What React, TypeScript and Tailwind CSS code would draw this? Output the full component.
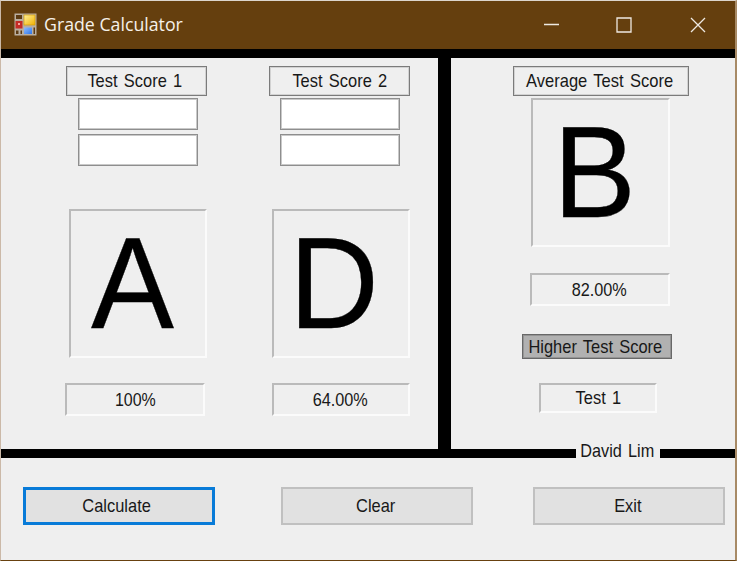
import type { ReactNode } from "react";

function Caption({ children, className = "scale-x-[0.865]" }: { children: ReactNode; className?: string }) {
  return (
    <span className={`inline-block whitespace-pre text-[19px] leading-[22px] text-[#181818] [word-spacing:2px] ${className}`}>
      {children}
    </span>
  );
}

function Heading({ children, className }: { children: ReactNode; className: string }) {
  return (
    <div className={`flex h-[30px] shrink-0 justify-center border border-[#7b7b7b] pt-[3px] shadow-[inset_0_0_0_1px_#d2d2d2] ${className}`}>
      {children}
    </div>
  );
}

function Sunken({ children, className }: { children: ReactNode; className: string }) {
  return (
    <div className={`flex shrink-0 border-2 border-t-[#bababa] border-r-[#fbfbfb] border-b-[#fbfbfb] border-l-[#bababa] ${className}`}>
      {children}
    </div>
  );
}

function Grade({ letter, className }: { letter: string; className: string }) {
  return (
    <Sunken className={`h-[149px] ${className}`}>
      <span className="inline-block origin-left scale-x-[0.965] text-[129px] leading-[145px] text-black [-webkit-text-stroke:0.3px_black]">
        {letter}
      </span>
    </Sunken>
  );
}

function ScoreInput({ className }: { className: string }) {
  return (
    <input
      aria-label="Score"
      className={`block h-8 w-[120px] shrink-0 border border-[#8e8e8e] bg-white shadow-[inset_0_0_0_1px_#c9c9c9] outline-none ${className}`}
    />
  );
}

function Button({ label, className }: { label: string; className: string }) {
  return (
    <button className={`flex h-[38px] w-[192px] shrink-0 items-center justify-center bg-[#e1e1e1] ${className}`}>
      <Caption>{label}</Caption>
    </button>
  );
}

function FormIcon() {
  return (
    <svg width="23" height="23" viewBox="0 0 23 23" className="relative -top-px shrink-0">
      <defs>
        <linearGradient id="gold" x1="0" y1="0" x2="1" y2="1">
          <stop stopColor="#fff19a" />
          <stop offset="1" stopColor="#f0b000" />
        </linearGradient>
        <linearGradient id="blue" x1="0" y1="0" x2="1" y2="1">
          <stop stopColor="#8ebcff" />
          <stop offset="1" stopColor="#2f76e8" />
        </linearGradient>
      </defs>
      <rect x=".5" y=".5" width="22" height="22" fill="#b9aea0" />
      <rect x="2" y="2" width="6" height="4" fill="#5c3a12" />
      <rect x="10" y="2" width="11" height="10" fill="url(#gold)" stroke="#d59b00" strokeWidth=".7" />
      <rect x="1.5" y="8" width="7" height="7.5" fill="#c52b25" />
      <rect x="4" y="10" width="2" height="2" fill="#f6a49b" />
      <rect x="10" y="14.5" width="8" height="6.5" fill="url(#blue)" />
      <path d="M2 17.5h2.5V21H2zm4.500 0H8V21H6.500zm13-3H21V21h-1.500z" fill="#5c3a12" />
    </svg>
  );
}

export default function App() {
  return (
    <div className="flex h-[561px] w-[737px] flex-col overflow-hidden border-t border-r-2 border-b border-l border-t-[#dcd5cc] border-r-[#a78a66] border-b-[#68410f] border-l-[#cbb9a8] bg-[#efefef] font-['Liberation_Sans',sans-serif]">
      <header className="flex h-12 shrink-0 items-center bg-[#653f0e] pl-[13px] text-white">
        <FormIcon />
        <span className="ml-[7px] inline-block origin-left scale-x-[0.985] pb-[3px] font-['Open_Sans',sans-serif] text-[18px] leading-6 text-[#f5f1ea]">
          Grade Calculator
        </span>
        <svg width="164" height="20" viewBox="0 0 164 20" className="mr-[28px] mb-px ml-auto" fill="none" stroke="#eee9e2" strokeWidth="1.3">
          <path d="M1 9.500h15M74 3h14v14H74zM148 3l14 14m0-14l-14 14" />
        </svg>
      </header>
      <div className="h-[9px] shrink-0 bg-black" />
      <main className="flex h-[391px] shrink-0">
        <section className="flex w-[437px] shrink-0 pt-2">
          <div className="flex w-[220px] shrink-0 flex-col">
            <Heading className="ml-[65px] w-[141px] pr-[3px]"><Caption>Test Score 1</Caption></Heading>
            <ScoreInput className="mt-[2px] ml-[77px]" />
            <ScoreInput className="mt-1 ml-[77px]" />
            <Grade letter="A" className="mt-[43px] ml-[68px] w-[138px] pl-5" />
            <Sunken className="mt-[25px] ml-[64px] h-[33px] w-[140px] justify-center pt-[4px]">
              <Caption className="scale-x-[0.84]">100%</Caption>
            </Sunken>
          </div>
          <div className="flex flex-col">
            <Heading className="ml-[48px] w-[141px]"><Caption>Test Score 2</Caption></Heading>
            <ScoreInput className="mt-[2px] ml-[59px]" />
            <ScoreInput className="mt-1 ml-[59px]" />
            <Grade letter="D" className="mt-[43px] ml-[51px] w-[138px] pl-[15px]" />
            <Sunken className="mt-[25px] ml-[51px] h-[33px] w-[138px] justify-center pt-[4px] pr-px">
              <Caption className="scale-x-[0.855]">64.00%</Caption>
            </Sunken>
          </div>
        </section>
        <div className="w-[13px] shrink-0 bg-black" />
        <section className="flex flex-1 flex-col pt-2">
          <Heading className="ml-[62px] w-[176px] pr-[2px]"><Caption className="scale-x-[0.87]">Average Test Score</Caption></Heading>
          <Grade letter="B" className="mt-[2px] ml-[80px] w-[139px] pl-[20px]" />
          <Sunken className="mt-[26px] ml-[79px] h-[33px] w-[140px] justify-center pt-[4px] pr-[2px]">
            <Caption className="scale-x-[0.855]">82.00%</Caption>
          </Sunken>
          <div className="mt-7 ml-[71px] flex h-[25px] w-[150px] shrink-0 justify-center border border-[#686868] bg-[#b1b1b1] pt-px pr-[3px] shadow-[inset_0_0_0_1px_#949494]">
            <Caption>Higher Test Score</Caption>
          </div>
          <Sunken className="mt-6 ml-[88px] h-[30px] w-[118px] justify-center pt-[2px]">
            <Caption>Test 1</Caption>
          </Sunken>
        </section>
      </main>
      <div className="flex h-[9px] shrink-0 items-center bg-black">
        <div className="ml-[575px] flex h-7 w-[84px] shrink-0 justify-center bg-[#efefef] pr-[2px]">
          <Caption className="scale-x-[0.855]">David Lim</Caption>
        </div>
      </div>
      <footer className="flex flex-1 items-start pt-[29px]">
        <Button label="Calculate" className="ml-[22px] border-[3px] border-[#087bd8] pr-[5px]" />
        <Button label="Clear" className="ml-[66px] border-2 border-[#c0c0c0] pr-[3px]" />
        <Button label="Exit" className="ml-[60px] border-2 border-[#c0c0c0] pr-[3px]" />
      </footer>
    </div>
  );
}
